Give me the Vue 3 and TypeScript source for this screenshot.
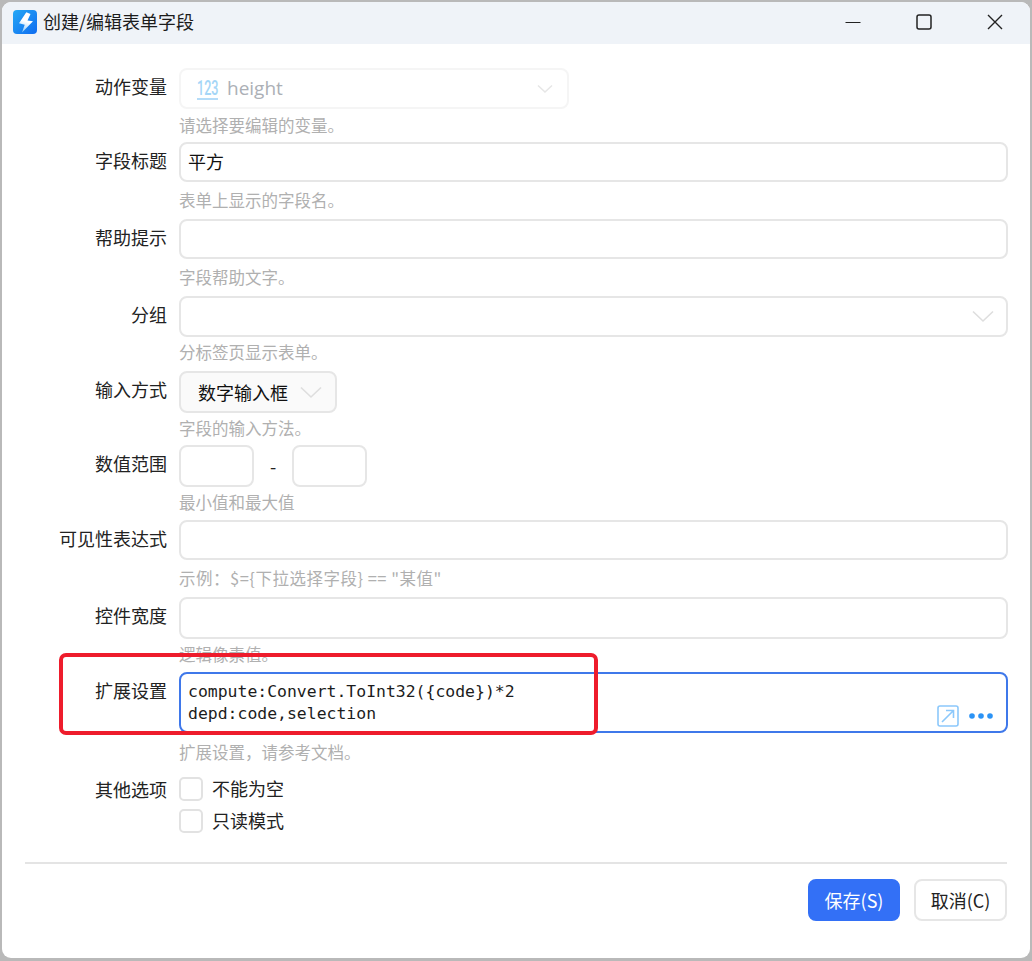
<script setup lang="ts">
const hintA = '请选择要编辑的变量。'
</script>

<template>
  <div class="window">
    <header class="titlebar">
      <svg class="logo" viewBox="0 0 24 24" width="24" height="24">
        <defs>
          <linearGradient id="lg" x1="0" y1="0" x2="1" y2="1">
            <stop offset="0" stop-color="#25a8f5" />
            <stop offset="1" stop-color="#0f6cf0" />
          </linearGradient>
          <linearGradient id="bolt" x1="0.6" y1="0" x2="0.35" y2="1">
            <stop offset="0.45" stop-color="#ffffff" />
            <stop offset="1" stop-color="#8fcbfa" />
          </linearGradient>
        </defs>
        <rect width="24" height="24" rx="4" fill="url(#lg)" />
        <path d="M13.3 2.3L17.5 4L14.5 10.5L20 11.3L9 22.5L11.7 14.7L6 13.3Z" fill="url(#bolt)" />
      </svg>
      <span class="title">创建/编辑表单字段</span>
      <span class="spacer"></span>
      <div class="winbtns">
        <svg width="16" height="16" viewBox="0 0 16 16"><path d="M0.5 8.5H15.5" stroke="#222" stroke-width="1.2" /></svg>
        <svg width="16" height="16" viewBox="0 0 16 16"><rect x="1" y="1" width="14" height="14" rx="2" fill="none" stroke="#222" stroke-width="1.5" /></svg>
        <svg width="16" height="16" viewBox="0 0 16 16"><path d="M1 1L15 15M15 1L1 15" stroke="#222" stroke-width="1.4" /></svg>
      </div>
    </header>

    <main class="form">
      <section class="row h74">
        <label class="lbl">动作变量</label>
        <div class="body">
          <div class="field disabled-select">
            <span class="num123"><span class="digits">123</span></span>
            <span class="var">height</span>
            <svg class="chev" width="16" height="10" viewBox="0 0 16 10"><path d="M1 1.5L8 8L15 1.5" fill="none" stroke="#e6e6e6" stroke-width="1.5" /></svg>
          </div>
          <p class="hint">{{ hintA }}</p>
        </div>
      </section>

      <section class="row h77">
        <label class="lbl">字段标题</label>
        <div class="body">
          <div class="field full">平方</div>
          <p class="hint">表单上显示的字段名。</p>
        </div>
      </section>

      <section class="row h77">
        <label class="lbl">帮助提示</label>
        <div class="body">
          <div class="field full"></div>
          <p class="hint">字段帮助文字。</p>
        </div>
      </section>

      <section class="row h75">
        <label class="lbl">分组</label>
        <div class="body">
          <div class="field full with-chev">
            <svg width="22" height="13" viewBox="0 0 22 13"><path d="M1 1.5L11 11L21 1.5" fill="none" stroke="#dedede" stroke-width="1.6" /></svg>
          </div>
          <p class="hint">分标签页显示表单。</p>
        </div>
      </section>

      <section class="row h74">
        <label class="lbl">输入方式</label>
        <div class="body">
          <div class="field combo">
            <span>数字输入框</span>
            <svg width="22" height="13" viewBox="0 0 22 13"><path d="M1 1.5L11 11L21 1.5" fill="none" stroke="#dedede" stroke-width="1.6" /></svg>
          </div>
          <p class="hint tight">字段的输入方法。</p>
        </div>
      </section>

      <section class="row h75">
        <label class="lbl">数值范围</label>
        <div class="body">
          <div class="range">
            <div class="field small"></div>
            <span class="dash">-</span>
            <div class="field small"></div>
          </div>
          <p class="hint tight">最小值和最大值</p>
        </div>
      </section>

      <section class="row h77">
        <label class="lbl">可见性表达式</label>
        <div class="body">
          <div class="field full"></div>
          <p class="hint wide">示例：$={下拉选择字段} == "某值"</p>
        </div>
      </section>

      <section class="row h75">
        <label class="lbl">控件宽度</label>
        <div class="body">
          <div class="field full tall"></div>
          <p class="hint tight">逻辑像素值。</p>
        </div>
      </section>

      <section class="row ext">
        <label class="lbl">扩展设置</label>
        <div class="body">
          <div class="textarea">
            <pre class="code">compute:Convert.ToInt32({code})*2
depd:code,selection</pre>
            <div class="tools">
              <svg width="22" height="22" viewBox="0 0 22 22">
                <rect x="1" y="1" width="20" height="20" rx="2" fill="none" stroke="#8cc8fb" stroke-width="1.6" />
                <path d="M5 17L16.5 5.5M9 5.5H16.5V13" fill="none" stroke="#8cc8fb" stroke-width="1.6" />
              </svg>
              <svg width="26" height="8" viewBox="0 0 26 8">
                <circle cx="4" cy="4" r="2.8" fill="#2b93f5" />
                <circle cx="13" cy="4" r="2.8" fill="#2b93f5" />
                <circle cx="22" cy="4" r="2.8" fill="#2b93f5" />
              </svg>
            </div>
          </div>
          <p class="hint">扩展设置，请参考文档。</p>
        </div>
      </section>

      <section class="row opts">
        <label class="lbl">其他选项</label>
        <div class="checks">
          <div class="check"><span class="box"></span><span class="cap">不能为空</span></div>
          <div class="check"><span class="box"></span><span class="cap">只读模式</span></div>
        </div>
      </section>
    </main>

    <footer class="footer">
      <button class="btn primary">保存(S)</button>
      <button class="btn">取消(C)</button>
    </footer>

    <div class="redmark"></div>
  </div>
</template>

<style>
html, body { margin: 0; background: #b9b9b9; }
</style>

<style scoped>
.window {
  position: relative;
  box-sizing: border-box;
  width: 1028px;
  height: 956px;
  margin: 2px 0 0 2px;
  background: #fff;
  border-radius: 9px;
  overflow: hidden;
  color: #222;
  font-family: "Noto Sans CJK SC", "Noto Sans", sans-serif;
  font-size: 18px;
}
.titlebar {
  display: flex;
  align-items: center;
  height: 42px;
  padding-left: 11px;
  background: #eff3f8;
}
.logo { flex: none; margin-top: -2px; }
.title { margin-left: 6px; font-size: 18px; line-height: 24px; color: #1c1c1c; margin-top: -4px; }
.spacer { flex: 1; }
.winbtns { display: flex; align-items: center; gap: 55px; padding-right: 27px; margin-top: -3px; }
.form { padding: 24px 22px 0 0; }
.row { display: flex; }
.h74 { height: 74px; }
.h75 { height: 75px; }
.h77 { height: 77px; }
.lbl {
  flex: none;
  width: 165px;
  text-align: right;
  line-height: 36px;
  white-space: nowrap;
  font-size: 18px;
  color: #222;
}
.body { flex: 1; min-width: 0; margin-left: 12px; }
.field {
  box-sizing: border-box;
  height: 40px;
  border: 2px solid #e6e6e6;
  border-radius: 8px;
  background: #fff;
  padding-left: 7px;
  line-height: 34px;
  color: #111;
}
.full { width: 829px; }
.with-chev { height: 41px; }
.tall { height: 42px; }
.disabled-select {
  position: relative;
  display: flex;
  align-items: center;
  width: 390px;
  height: 41px;
  padding-left: 16px;
  border-color: #f5f5f5;
}
.num123 {
  display: block;
  flex: none;
  width: 21px;
  height: 19px;
  border-bottom: 2px solid #b5dcf8;
  position: relative;
  top: 1px;
}
.digits {
  display: block;
  transform: scaleX(0.6);
  transform-origin: left center;
  font-family: "Roboto", sans-serif;
  font-size: 21px;
  font-weight: 500;
  line-height: 19px;
  color: #a5d6f7;
  white-space: nowrap;
}
.var { margin-left: 9px; font-family: "Open Sans", sans-serif; font-size: 19px; line-height: 26px; margin-top: -2px; color: #acb0b6; }
.chev { margin-left: auto; margin-right: 14px; }
.with-chev { display: flex; align-items: center; justify-content: flex-end; padding-right: 12px; }
.combo {
  display: flex;
  align-items: center;
  justify-content: space-between;
  width: 158px;
  height: 42px;
  padding: 0 13px 0 17px;
  background: #fafafa;
}
.range { display: flex; align-items: center; }
.small { width: 75px; height: 42px; }
.dash { width: 38px; text-align: center; font-size: 18px; }
.hint {
  margin: 6px 0 0;
  font-size: 16.5px;
  line-height: 24px;
  color: #b0b0b0;
  white-space: nowrap;
}
.hint.wide { letter-spacing: 0.5px; }
.with-chev + .hint { margin-top: 3px; }
.disabled-select + .hint { margin-top: 4px; }
.hint.tight { margin-top: 3px; }
.ext { height: 105px; }
.textarea {
  position: relative;
  box-sizing: border-box;
  width: 829px;
  height: 61px;
  border: 2px solid #3f78ea;
  border-radius: 8px;
  background: #fff;
}
.code {
  margin: 0;
  padding: 7px 0 0 7px;
  font-family: "DejaVu Sans Mono", monospace;
  font-size: 16.45px;
  line-height: 22px;
  color: #1c1c1c;
}
.tools {
  position: absolute;
  right: 12px;
  bottom: 4px;
  display: flex;
  align-items: center;
  gap: 9px;
}
.ext .hint { margin-top: 7px; }
.opts { height: auto; }
.opts .lbl { line-height: 24px; }
.checks { display: flex; flex-direction: column; gap: 8px; margin-left: 12px; margin-top: 0; }
.check { display: flex; align-items: center; gap: 9px; height: 24px; }
.cap { line-height: 22px; margin-top: -2px; }
.box {
  box-sizing: border-box;
  width: 24px;
  height: 24px;
  border: 2px solid #e2e2e2;
  border-radius: 5px;
  background: #fff;
}
.footer {
  display: flex;
  justify-content: flex-end;
  gap: 14px;
  margin: 29px 23px 0 23px;
  padding-top: 15px;
  border-top: 2px solid #e4e4e4;
}
.btn {
  box-sizing: border-box;
  width: 93px;
  height: 42px;
  border: 2px solid #e6e6e6;
  border-radius: 8px;
  background: #fff;
  color: #222;
  font: 18px "Noto Sans CJK SC", "Noto Sans", sans-serif;
  padding: 0;
}
.primary { width: 92px; background: #3370f6; border-color: #3370f6; color: #fff; }
.redmark {
  position: absolute;
  left: 57px;
  top: 651px;
  box-sizing: border-box;
  width: 539px;
  height: 82px;
  border: 4px solid #ee1c2c;
  border-radius: 7px;
  pointer-events: none;
}
</style>
